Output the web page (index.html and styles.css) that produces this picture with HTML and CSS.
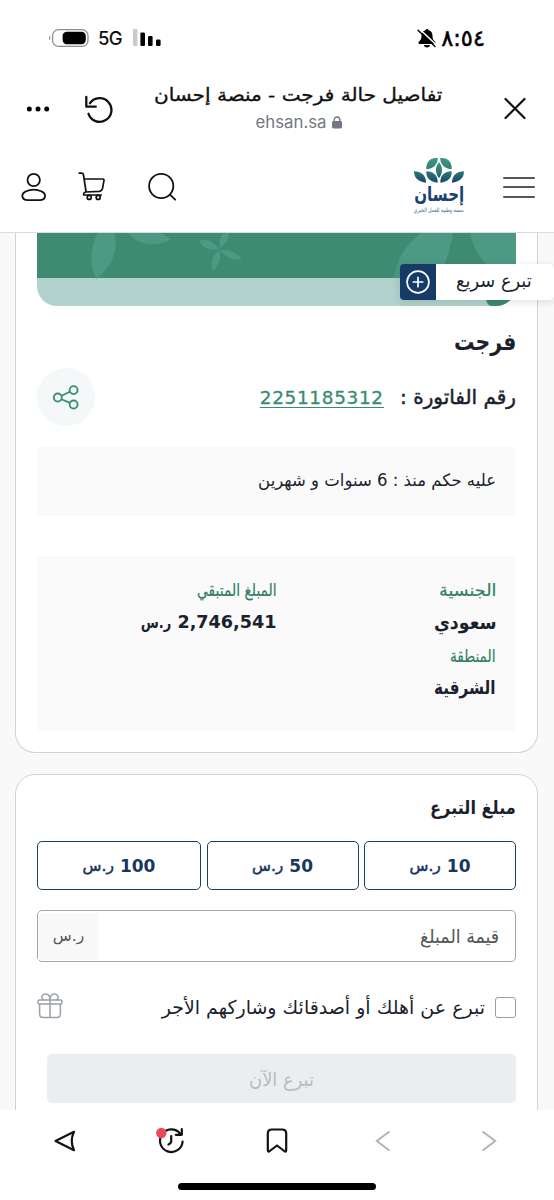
FILE: index.html
```html
<!DOCTYPE html>
<html lang="ar">
<head>
<meta charset="utf-8">
<title>تفاصيل حالة فرجت - منصة إحسان</title>
<link rel="stylesheet" href="styles.css">
</head>
<body>
<header class="status">
  <svg class="battery" width="42" height="20" viewBox="0 0 42 20"><path d="M3.200 7.500a3.400 3.400 0 0 0 0 5z" fill="#777"/><rect x="5.600" y="1.600" width="35.400" height="16.800" rx="6" fill="none" stroke="#8d8d8d" stroke-width="1.300"/><rect x="15.600" y="3.800" width="23.200" height="12.400" rx="4.200" fill="#000"/></svg>
  <span class="net">5G</span>
  <svg class="signal" width="30" height="20" viewBox="0 0 30 20"><rect x="1" y="1" width="4.400" height="17" rx="1.200" fill="#cacaca"/><rect x="8.400" y="4.500" width="4.600" height="13.500" rx="1.200"/><rect x="16" y="8" width="4.600" height="10" rx="1.200"/><rect x="24" y="11.500" width="4.600" height="6.500" rx="1.200"/></svg>
  <svg class="bell" width="20" height="20" viewBox="0 0 20 20"><path d="M10 1a2 2 0 0 0-1.600 1.200C5.600 3 4.500 5 4.500 8c0 3-1 4.300-2.500 5.600-.9.900-.6 2.400.6 2.400h14.800c1.200 0 1.500-1.500.6-2.400C16.500 12.300 15.500 11 15.500 8c0-3-1.100-5-3.900-5.800A2 2 0 0 0 10 1zM7 17h6a3 2.400 0 0 1-6 0z"/><path d="M2.500 1 20 17.500" stroke="#fff" stroke-width="1.600"/><path d="M1 2.200 18 18.500" stroke="#000" stroke-width="1.400" stroke-linecap="round"/></svg>
  <span class="time" dir="ltr">٨:٥٤</span>
</header>

<div class="browser">
  <svg class="dots" width="24" height="8" viewBox="0 0 24 8"><circle cx="3.300" cy="4" r="2.500"/><circle cx="12" cy="4" r="2.500"/><circle cx="20.700" cy="4" r="2.500"/></svg>
  <svg class="reload" width="30" height="28" viewBox="0 0 30 28" fill="none" stroke="#111" stroke-width="2.300" stroke-linecap="round" stroke-linejoin="round"><path d="M2.300 2v9.700h9.500"/><path d="M6 8.200A11.800 11.800 0 1 1 4.500 18.800"/></svg>
  <div class="address" dir="rtl">
    <div class="page"><span class="fit pagetitle">تفاصيل حالة فرجت - منصة إحسان</span></div>
    <div class="host" dir="ltr"><span>ehsan.sa</span><svg width="12" height="13" viewBox="0 0 12 13"><rect x="1" y="5" width="10" height="7.500" rx="1.400" fill="#747684"/><path d="M3.200 5.500V3.800a2.800 2.800 0 0 1 5.600 0v1.700" fill="none" stroke="#747684" stroke-width="1.400"/></svg></div>
  </div>
  <svg class="close" width="24" height="24" viewBox="0 0 24 24" fill="none" stroke="#111" stroke-width="2.200" stroke-linecap="round"><path d="M2.500 2 21.500 21M21.500 2 2.500 21"/></svg>
</div>

<nav class="site">
  <svg class="user" width="28" height="30" viewBox="0 0 28 30" fill="none" stroke="#111" stroke-width="1.800"><circle cx="13.700" cy="8" r="6.200"/><path d="M13.700 17.600c5 0 11.400 2.400 11.400 6 0 3.500-2.300 4.600-5.700 4.600H8c-3.400 0-5.700-1.100-5.700-4.600 0-3.600 6.400-6 11.400-6z"/></svg>
  <svg class="cart" width="28" height="30" viewBox="0 0 28 30" fill="none" stroke="#111" stroke-width="1.700" stroke-linecap="round" stroke-linejoin="round"><path d="M1.200 1.200h2.600c1.200 0 1.500.8 1.700 1.800l2.600 17M6.200 7h18.500c1.200 0 1.400.7 1.200 1.800l-1.300 7.400c-.4 2-1.400 3-3.400 3.200L7.900 20c-1.700.3-2.500 1.300-2.200 3h17.500"/><circle cx="11.200" cy="25.400" r="2"/><circle cx="20.200" cy="25.400" r="2"/></svg>
  <svg class="search" width="30" height="30" viewBox="0 0 30 30" fill="none" stroke="#111" stroke-width="1.800" stroke-linecap="round"><circle cx="14.200" cy="14" r="12.100"/><path d="m23 22.700 5.200 5"/></svg>
  <div class="logo" dir="rtl">
    <svg width="50" height="27" viewBox="0 0 52 28" preserveAspectRatio="none"><defs><linearGradient id="leaf" x1="0" y1="0" x2="0" y2="28" gradientUnits="userSpaceOnUse"><stop offset="0" stop-color="#419a79"/><stop offset=".5" stop-color="#2f7d78"/><stop offset="1" stop-color="#173f69"/></linearGradient></defs><g fill="url(#leaf)"><path d="M24.800 1C17 .2 12.400 5 12.800 12.800 20 12 24.600 8 24.800 1z"/><path d="M27.200 1C35 .2 39.600 5 39.200 12.800 32 12 27.400 8 27.200 1z"/><path d="M26 5.500c4.200 5 4.200 11 0 16.500-4.200-5.500-4.200-11.500 0-16.500z"/><path d="M0 14.800c7.500 0 12.500 4.200 12.500 11.800C5 26 0 22 0 14.800z"/><path d="M52 14.800c-7.500 0-12.500 4.200-12.500 11.800C47 26 52 22 52 14.800z"/><path d="M12.800 14.800C20 15 25 19 24.600 26.600 17 26 12.500 22 12.800 14.800z"/><path d="M39.200 14.800C32 15 27 19 27.400 26.600 35 26 39.500 22 39.200 14.800z"/></g></svg>
    <div class="brand"><span class="fit brandname">إحسان</span></div>
    <div class="tag"><span class="fit tagline">منصة وطنية للعمل الخيري</span></div>
  </div>
  <div class="menu"><i></i><i></i><i></i></div>
</nav>

<main dir="rtl">
  <section class="card case">
    <div class="banner">
      <svg width="480" height="73" viewBox="0 0 480 73"><rect width="480" height="45" fill="#3e8b71"/><rect y="45" width="480" height="28" fill="#b2d3cd"/><g fill="#4c9984"><path d="M62 0C54 14 53 30 60 46 76 34 83 17 78 0z"/><path d="M92 0c11 13 27 14 43 7-3-3-6-5-11-7z"/><path d="M187 0c-3 4-4 9-3 15 6-4 9-9 9-15z"/><path d="M163 8c7-3 14 0 20 8-8 2-15 0-20-8z"/><path d="M184 17c8-1 15 2 22 9-8 2-16 0-22-9z"/><path d="M183 17c3 7 0 15-6 21-3-8-1-15 6-21z"/><path d="M385 0C368 12 359 31 358 46l42-1c10-12 14-28 17-45z"/><path d="M434 0c3 15 10 27 22 36l24 9V0z"/></g><path d="M358 45c-2 8 0 19 5 28h12l25-28z" fill="#b0d1cb"/><path d="M450 66h30v7h-25q-4-1-5-7z" fill="#3e8b71"/></svg>
    </div>
    <h1><span class="fit casename">فرجت</span></h1>
    <div class="bill">
      <span class="billlabel">رقم الفاتورة :</span>
      <a class="fit billno" dir="ltr">2251185312</a>
      <div class="share"><svg width="28" height="28" viewBox="0 0 28 28" fill="none" stroke="#3a8c70" stroke-width="1.800"><circle cx="5.800" cy="14.500" r="4"/><circle cx="21.600" cy="7.100" r="4"/><circle cx="21.600" cy="21.500" r="4"/><path d="m9.500 12.800 8.400-4M9.500 16.200l8.400 3.700"/></svg></div>
    </div>
    <div class="note"><span class="fit since">عليه حكم منذ : 6 سنوات و شهرين</span></div>
    <div class="facts">
      <div class="col">
        <div class="k"><span class="fit nationality">الجنسية</span></div>
        <div class="v"><span class="fit saudi">سعودي</span></div>
        <div class="k second"><span class="fit region">المنطقة</span></div>
        <div class="v"><span class="fit eastern">الشرقية</span></div>
      </div>
      <div class="col">
        <div class="k"><span class="fit remaining">المبلغ المتبقي</span></div>
        <div class="v amount"><span>2,746,541</span><span class="fit cur">ر.س</span></div>
      </div>
    </div>
  </section>

  <section class="card donate">
    <h2><span class="fit heading">مبلغ التبرع</span></h2>
    <div class="choices">
      <button class="choice"><span>10</span><span class="cur">ر.س</span></button>
      <button class="choice"><span>50</span><span class="cur">ر.س</span></button>
      <button class="choice wide"><span>100</span><span class="cur">ر.س</span></button>
    </div>
    <div class="field"><span class="fit placeholder">قيمة المبلغ</span><div class="unit">ر.س</div></div>
    <div class="gift"><i class="check"></i><span class="giftlabel">تبرع عن أهلك أو أصدقائك وشاركهم الأجر</span>
      <svg width="26" height="26" viewBox="0 0 26 26" fill="none" stroke="#9c9fab" stroke-width="1.500"><rect x="1" y="7" width="24" height="4" rx="1.500"/><path d="M2.600 11v10q0 3.500 3.500 3.500h13.800q3.500 0 3.500-3.500V11M13 7v17.500M13 7C13 3 11 1 8.500 1 6 1 4.500 3 5 5q.5 1.500 2 2M13 7c0-4 2-6 4.500-6S21.500 3 21 5q-.5 1.500-2 2"/></svg></div>
    <button class="now" disabled><span class="fit nowlabel">تبرع الآن</span></button>
  </section>

  <aside class="quick"><span class="fit quicklabel">تبرع سريع</span><div class="plus"><svg width="24" height="24" viewBox="0 0 24 24" fill="none" stroke="#fff" stroke-width="1.700" stroke-linecap="round"><circle cx="12" cy="12" r="10.900"/><path d="M12 7.300v9.400M7.300 12h9.400"/></svg></div></aside>
</main>

<footer class="tabs">
  <svg width="24" height="24" viewBox="0 0 24 24" fill="none" stroke="#111" stroke-width="2.200" stroke-linejoin="round"><path d="M2.500 12 21 2.800q-4.500 9.200 0 18.400z"/></svg>
  <svg width="30" height="28" viewBox="0 0 30 28" fill="none" stroke="#111" stroke-width="2.200" stroke-linecap="round" stroke-linejoin="round"><path d="M26.600 14.500A11.300 11.300 0 1 1 24 6.500M25.800 2v5.800h-6M15.200 9v5.500q-.4 2-2.700 3"/><circle cx="5.300" cy="6" r="5.200" fill="#e84a5c" stroke="none"/></svg>
  <svg width="22" height="28" viewBox="0 0 22 28" fill="none" stroke="#111" stroke-width="2.200" stroke-linejoin="round"><path d="M1.800 23V6.500q0-4 4-4h10.400q4 0 4 4V23q0 2.600-2 1L11 18.500 3.800 24q-2 1.600-2-1z"/></svg>
  <svg width="16" height="22" viewBox="0 0 16 22" fill="none" stroke="#b3b3b3" stroke-width="2"><path d="M14.500 1.500 1.800 11l12.700 9.500"/></svg>
  <svg width="16" height="22" viewBox="0 0 16 22" fill="none" stroke="#b3b3b3" stroke-width="2"><path d="M1.500 1.500 14.200 11 1.500 20.500"/></svg>
  <div class="home"></div>
</footer>
</body>
</html>
```
FILE: styles.css
```css
*{box-sizing:border-box}
body{margin:0;width:554px;height:1200px;overflow:hidden;display:flex;flex-direction:column;background:#fff;font-family:"DejaVu Sans",sans-serif;color:#1c1f2e}
svg{display:block;flex:none}

/* Condenses or widens a label from its right edge */
.fit{display:inline-block;white-space:nowrap;flex:none;transform:scaleX(var(--sx,1));transform-origin:right center}

.status{height:75px;flex:none;display:flex;align-items:center;padding:0 69px 0 47px}
.net{font:500 18.500px Inter,sans-serif;color:#111;margin-left:9px;width:26px;letter-spacing:-.6px;white-space:nowrap}
.signal{margin-left:8px}
.bell{margin-left:auto;margin-right:4px}
.time{font-size:22.500px;-webkit-text-stroke:.5px #000;color:#000;line-height:24px}

.browser{height:67px;flex:none;display:flex;align-items:center;padding:0 27px 0 26px}
.reload{margin-left:34px}
.address{flex:1;margin-right:61px;height:67px;padding-top:7px}
.page{height:26px;line-height:26px}
.pagetitle{--sx:1.112;font-size:18px;-webkit-text-stroke:.35px #111;color:#111}
.host{display:flex;align-items:center;justify-content:center;gap:4px;height:28px;font:16.800px Inter,sans-serif;color:#747684;padding-left:42px}

.site{height:91px;flex:none;display:flex;align-items:center;padding:0 19px 0 20px;border-bottom:1px solid #dcdcdc}
.cart{margin-left:30px}
.search{margin-left:41px}
.logo{margin-left:auto;width:50px;height:60px}
.brand{height:19px;line-height:21px}
.brandname{--sx:.755;font-size:20px;font-weight:bold;color:#1b3f70}
.tag{height:8px;line-height:8px}
.tagline{--sx:.758;font-size:6px;color:#4d6488}
.menu{margin-left:39px;width:32px;display:flex;flex-direction:column;gap:7.500px}
.menu i{height:2px;background:#55555a;border-radius:1px}

main{height:877px;flex:none;background:#f9f9f9;position:relative;overflow:hidden;padding:0 16px 0 15px}
.card{background:#fff;border:1px solid #d2d2d4;padding:0 21px}
.case{height:520px;border-top:0;border-radius:0 0 20px 20px}
.banner{height:73px;border-radius:0 0 20px 20px;overflow:hidden}
h1{margin:16px 0 0;height:40px;line-height:40px;font-size:24px}
.casename{--sx:.85}
.bill{display:flex;align-items:center;height:58px;margin-top:6px;font-size:20px}
.billlabel{white-space:nowrap;-webkit-text-stroke:.5px}
.billno{--sx:1.1;margin:2px 16px 0 0;font-size:16.800px;letter-spacing:.6px;color:#3a8c70;-webkit-text-stroke:.3px;border-bottom:1.500px solid #3a8c70;line-height:18px}
.share{margin-right:auto;width:58px;height:58px;border-radius:50%;background:#f4f8f9;display:grid;place-items:center}
.note{margin-top:21px;height:69px;background:#fafafa;border-radius:4px;padding:0 20px;line-height:67px;font-size:17px}
.since{--sx:.971}
.facts{margin-top:40px;height:175px;background:#fafafa;border-radius:4px;padding:18px 20px;display:grid;grid-template-columns:1fr 1fr}
.k{height:32px;line-height:32px;font-size:17px;color:#2f7d62;-webkit-text-stroke:.2px}
.second{padding-top:1px}
.v{height:33px;line-height:33px;font-size:19px;font-weight:bold}
.nationality{--sx:1.036}
.saudi{--sx:.913}
.region{--sx:.807}
.eastern{--sx:.805}
.remaining{--sx:.816}
.amount{display:flex;gap:6px;font-size:17.600px}
.amount .cur{--sx:.82;font-size:16px}

.donate{margin-top:21px;height:380px;border-radius:20px 20px 0 0}
h2{margin:14px 0 0;height:36px;line-height:36px;font-size:19px}
.heading{--sx:.851}
.choices{margin-top:16px;display:flex;gap:5.500px}
button{border:1.500px solid #1b3e63;border-radius:5px;background:#fff;height:49px;padding:0;color:#17375e;font:bold 17px "DejaVu Sans",sans-serif}
.choice{width:152px;display:flex;align-items:center;justify-content:center;gap:6px}
.choice .cur{font-weight:normal;font-size:15.500px;-webkit-text-stroke:.5px}
.wide{width:164px}
.field{margin:20px 0 0 0;height:52px;border:1.500px solid #a5a5ab;border-radius:5px;display:flex;align-items:center;padding-right:16px;font-size:19px;color:#555}
.placeholder{--sx:.919}
.unit{margin-right:auto;width:61px;height:47px;background:#f9f9fa;display:grid;place-items:center;font-size:15.500px}
.gift{margin-top:30px;height:30px;display:flex;align-items:center;font-size:19px}
.giftlabel{white-space:nowrap}
.check{width:21px;height:21px;border:1.500px solid #9a9ca4;border-radius:3px;margin-left:10px}
.gift svg{margin:0 auto 3px 0}
.now{margin-top:32px;width:469px;height:49px;border:0;background:#ecedef;color:#b9bbc2;font-weight:normal;font-size:19px}
.nowlabel{--sx:.942;transform-origin:center}

.quick{position:absolute;right:0;top:31px;width:154px;height:36px;display:flex;align-items:center;background:#fff;border-radius:5px;box-shadow:0 2px 8px rgba(0,0,0,.12);padding:0 22px 4px 0;font-size:19px}
.quicklabel{--sx:.938}
.plus{margin:4px auto 0 0;width:36px;height:36px;background:#163b66;border-radius:4px 0 0 4px;display:grid;place-items:center}

.tabs{height:90px;flex:none;position:relative;display:grid;grid-template-columns:repeat(5,106px);grid-template-rows:28px;padding:17px 0 0 12px;place-items:center;align-content:start;background:#fff}
.home{position:absolute;left:178px;top:73px;width:198px;height:7px;border-radius:4px;background:#000}
```
